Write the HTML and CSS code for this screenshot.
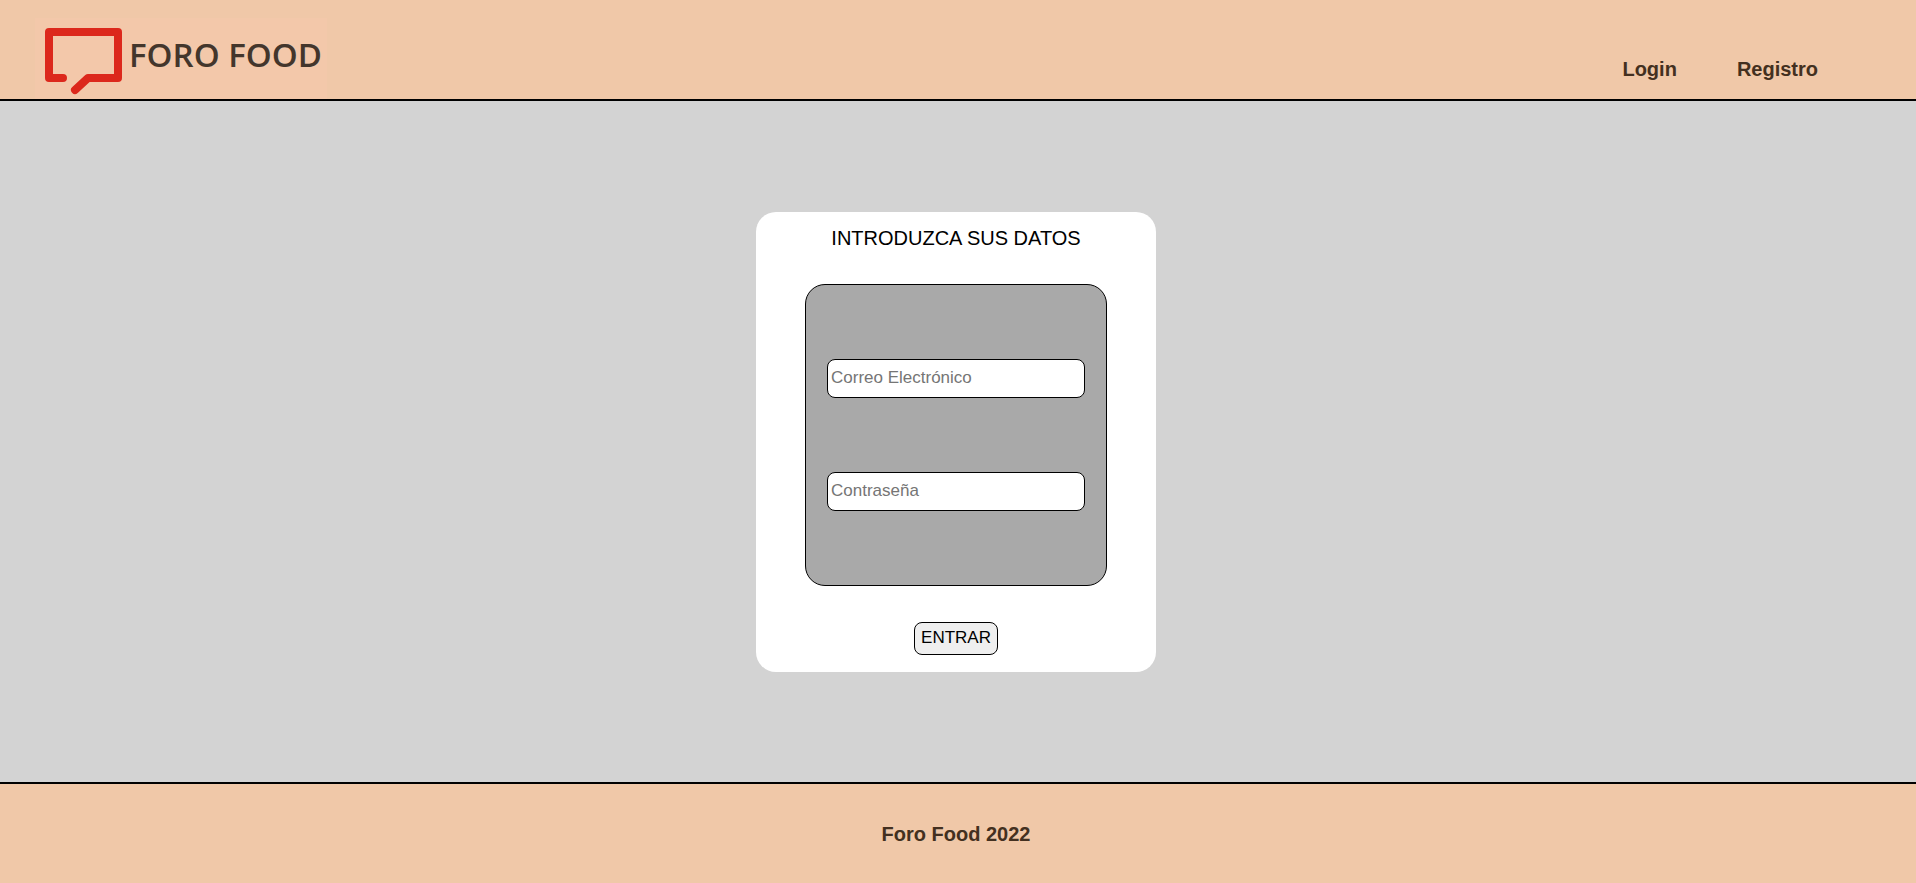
FILE: index.html
```
<!DOCTYPE html>
<html lang="es">
<head>
<meta charset="utf-8">
<title>Foro Food</title>
<link rel="stylesheet" href="styles.css">
</head>
<body>
<header class="header">
  <a class="logo" href="#">
    <svg class="logo-icon" viewBox="0 0 80 66" aria-hidden="true">
      <path d="M19 51H5V5H74V51H44L31 63"/>
    </svg>
    <span class="logo-text">FORO FOOD</span>
  </a>
  <nav class="nav">
    <a class="nav-link" href="#">Login</a>
    <a class="nav-link" href="#">Registro</a>
  </nav>
</header>
<main class="main">
  <form class="card">
    <h1 class="card-title">INTRODUZCA SUS DATOS</h1>
    <div class="fields">
      <input class="field" type="email" placeholder="Correo Electrónico" aria-label="Correo Electrónico">
      <input class="field" type="password" placeholder="Contraseña" aria-label="Contraseña">
    </div>
    <button class="submit" type="submit">ENTRAR</button>
  </form>
</main>
<footer class="footer">Foro Food 2022</footer>
</body>
</html>
```
FILE: styles.css
```
* {
  box-sizing: border-box;
}

body {
  display: flex;
  flex-direction: column;
  min-height: 100vh;
  margin: 0;
  background: #d3d3d3;
  font-family: "Liberation Sans", Arial, sans-serif;
}

.header {
  display: flex;
  justify-content: space-between;
  align-items: flex-end;
  padding: 18px 98px 0 35px;
  background: #f0c8a8;
  border-bottom: 2px solid #000;
}

.logo {
  display: flex;
  align-items: flex-start;
  padding: 9px 5px 6px 9px;
  background: #f3c8aa;
  color: #43362c;
  text-decoration: none;
}

.logo-icon {
  width: 80px;
  height: 66px;
  overflow: visible;
  fill: none;
  stroke: #dc281c;
  stroke-width: 8;
  stroke-linecap: round;
  stroke-linejoin: round;
}

.logo-text {
  margin-left: 5px;
  padding-top: 8px;
  font-family: "Open Sans", "Noto Sans", sans-serif;
  font-size: 33px;
  font-weight: 600;
  line-height: 40px;
}

.nav {
  display: flex;
  gap: 60px;
  padding-bottom: 18px;
}

.nav-link,
.footer {
  color: #433020;
  font-size: 20px;
  font-weight: bold;
  line-height: 24px;
  text-decoration: none;
}

.main {
  display: flex;
  flex: 1;
  justify-content: center;
  align-items: center;
  padding-right: 4px;
}

.card {
  display: flex;
  flex-direction: column;
  align-items: center;
  width: 400px;
  padding: 14px 48px 17px;
  background: #fff;
  border-radius: 20px;
}

.card-title {
  margin: 0;
  font-size: 20px;
  font-weight: normal;
  line-height: 24px;
}

.fields {
  display: flex;
  flex-direction: column;
  gap: 74px;
  width: 302px;
  margin: 34px 0 36px;
  padding: 74px 21px;
  background: #a9a9a9;
  border: 1px solid #000;
  border-radius: 20px;
}

.field {
  width: 100%;
  height: 39px;
  padding: 1px 3px;
  background: #fff;
  border: 1px solid #000;
  border-radius: 8px;
  font: 17px "Liberation Sans", Arial, sans-serif;
}

.field::placeholder {
  color: #757575;
}

.submit {
  height: 33px;
  padding: 1px 6px;
  background: #efefef;
  border: 1px solid #000;
  border-radius: 8px;
  color: #000;
  font: 17px "Liberation Sans", Arial, sans-serif;
}

.footer {
  padding: 38px 4px 37px 0;
  background: #f0c8a8;
  border-top: 2px solid #000;
  text-align: center;
}
```
